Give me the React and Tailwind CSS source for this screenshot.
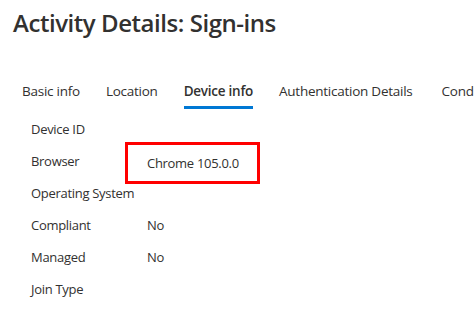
export default function App() {
  const tabs = ["Basic info", "Location", "Device info", "Authentication Details", "Conditional Access"];
  const rows = [
    ["Device ID", ""],
    ["Browser", "Chrome 105.0.0"],
    ["Operating System", ""],
    ["Compliant", "No"],
    ["Managed", "No"],
    ["Join Type", ""],
  ];

  return (
    <div className="w-[474px] h-[314px] overflow-hidden bg-white text-[#323130] font-['Open_Sans',sans-serif]">
      <h1 className="pl-[13px] pt-[7px] text-[24px] leading-[32px] font-semibold tracking-[-0.45px] whitespace-nowrap">
        Activity Details: Sign-ins
      </h1>

      {/* Tabs */}
      <div className="mt-[42px] flex pl-[22px] gap-[26px] whitespace-nowrap text-[13.5px] leading-[20px] tracking-[-0.25px]">
        {tabs.map((t) => (
          <div key={t} className={t === "Conditional Access" ? "ml-[3px] flex flex-col" : "flex flex-col"}>
            <span className={t === "Device info" ? "font-semibold" : ""}>{t}</span>
            <span className={t === "Device info" ? "mt-[5px] h-[3px] bg-[#0078d4]" : "mt-[5px] h-[3px]"} />
          </div>
        ))}
      </div>

      {/* Device info rows */}
      <div className="mt-[4px] pl-[31px] text-[13px] leading-[32px] tracking-[-0.3px]">
        {rows.map(([label, value]) => (
          <div key={label} className="flex h-[32px] items-center">
            <span className="w-[116px]">{label}</span>
            {label === "Browser" ? (
              <span className="-ml-[22px] mt-[4px] h-[42px] w-[135px] border-[3px] border-[#ff0000] pl-[19px] flex items-center">
                {value}
              </span>
            ) : (
              <span>{value}</span>
            )}
          </div>
        ))}
      </div>
    </div>
  );
}
